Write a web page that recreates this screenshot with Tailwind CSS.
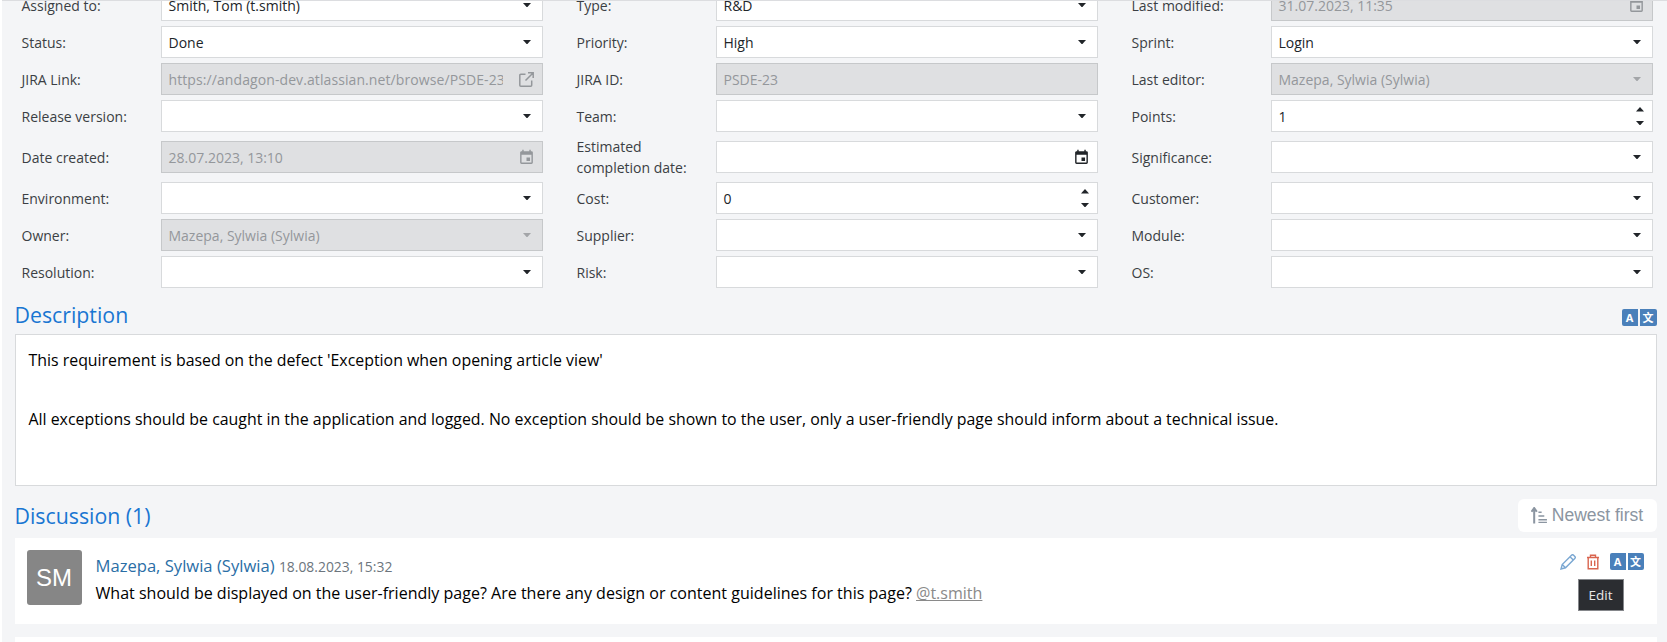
<!DOCTYPE html>
<html lang="en">
<head>
<meta charset="UTF-8" />
<title>Requirement</title>
<script src="https://cdn.jsdelivr.net/npm/@tailwindcss/browser@4"></script>
</head>
<body class="bg-white h-[642px] overflow-hidden font-['Open_Sans',sans-serif] text-[#212529]">
<div class="ml-[2px] h-[642px] overflow-hidden bg-[#f4f5f7] border-t border-[#dcdde0]">
  <div class="-mt-[12px] pl-[19.5px] pr-[14.5px] w-[1665px]">

    <form class="grid grid-cols-3 gap-x-[34px] gap-y-[5px] w-[1631px] text-[14px]">
      <div class="h-[32px] flex items-center"><label class="w-[139px] text-[#3b3f44]">Assigned to:</label><div class="flex-1 h-[32px] bg-white border border-[#d8dadc] flex items-center justify-between pl-[7px] pr-[11px]"><span>Smith, Tom (t.smith)</span><svg class="w-[8px] h-[4.5px]" viewBox="0 0 9 5"><path d="M0 0h9L4.5 5z" fill="#212529"/></svg></div></div>
      <div class="h-[32px] flex items-center"><label class="w-[139px] text-[#3b3f44]">Type:</label><div class="flex-1 h-[32px] bg-white border border-[#d8dadc] flex items-center justify-between pl-[7px] pr-[11px]"><span>R&amp;D</span><svg class="w-[8px] h-[4.5px]" viewBox="0 0 9 5"><path d="M0 0h9L4.5 5z" fill="#212529"/></svg></div></div>
      <div class="h-[32px] flex items-center"><label class="w-[139px] text-[#3b3f44]">Last modified:</label><div class="flex-1 h-[32px] bg-[#dfe0e2] border border-[#c6c8ca] flex items-center justify-between pl-[7px] pr-[7px] text-[#94979b]"><span>31.07.2023, 11:35</span><svg class="w-[17px] h-[17px]" viewBox="0 0 24 24"><path d="M19 19H5V8h14m-3-7v2H8V1H6v2H5c-1.110 0-2 .890-2 2v14a2 2 0 0 0 2 2h14a2 2 0 0 0 2-2V5a2 2 0 0 0-2-2h-1V1m-1 11h-5v5h5v-5z" fill="#94979b"/></svg></div></div>

      <div class="h-[32px] flex items-center"><label class="w-[139px] text-[#3b3f44]">Status:</label><div class="flex-1 h-[32px] bg-white border border-[#d8dadc] flex items-center justify-between pl-[7px] pr-[11px]"><span>Done</span><svg class="w-[8px] h-[4.5px]" viewBox="0 0 9 5"><path d="M0 0h9L4.5 5z" fill="#212529"/></svg></div></div>
      <div class="h-[32px] flex items-center"><label class="w-[139px] text-[#3b3f44]">Priority:</label><div class="flex-1 h-[32px] bg-white border border-[#d8dadc] flex items-center justify-between pl-[7px] pr-[11px]"><span>High</span><svg class="w-[8px] h-[4.5px]" viewBox="0 0 9 5"><path d="M0 0h9L4.5 5z" fill="#212529"/></svg></div></div>
      <div class="h-[32px] flex items-center"><label class="w-[139px] text-[#3b3f44]">Sprint:</label><div class="flex-1 h-[32px] bg-white border border-[#d8dadc] flex items-center justify-between pl-[7px] pr-[11px]"><span>Login</span><svg class="w-[8px] h-[4.5px]" viewBox="0 0 9 5"><path d="M0 0h9L4.5 5z" fill="#212529"/></svg></div></div>

      <div class="h-[32px] flex items-center"><label class="w-[139px] text-[#3b3f44]">JIRA Link:</label><div class="flex-1 h-[32px] bg-[#dfe0e2] border border-[#c6c8ca] flex items-center justify-between pl-[7px] pr-[8px] text-[#94979b]"><span class="w-[334px] overflow-hidden whitespace-nowrap tracking-[0.09px]">https://andagon-dev.atlassian.net/browse/PSDE-23</span><svg class="w-[15px] h-[15px]" viewBox="0 0 15 15"><path d="M12.700 8.500v4.700a1 1 0 0 1-1 1H1.800a1 1 0 0 1-1-1V3.300a1 1 0 0 1 1-1h4.700M9 .8h5.200V6M14 1 6.500 8.500" fill="none" stroke="#94979b" stroke-width="1.500"/></svg></div></div>
      <div class="h-[32px] flex items-center"><label class="w-[139px] text-[#3b3f44]">JIRA ID:</label><div class="flex-1 h-[32px] bg-[#dfe0e2] border border-[#c6c8ca] flex items-center pl-[7px] text-[#94979b]"><span>PSDE-23</span></div></div>
      <div class="h-[32px] flex items-center"><label class="w-[139px] text-[#3b3f44]">Last editor:</label><div class="flex-1 h-[32px] bg-[#dfe0e2] border border-[#c6c8ca] flex items-center justify-between pl-[7px] pr-[11px] text-[#94979b]"><span>Mazepa, Sylwia (Sylwia)</span><svg class="w-[8px] h-[4.5px]" viewBox="0 0 9 5"><path d="M0 0h9L4.5 5z" fill="#a3a5a8"/></svg></div></div>

      <div class="h-[32px] flex items-center"><label class="w-[139px] text-[#3b3f44]">Release version:</label><div class="flex-1 h-[32px] bg-white border border-[#d8dadc] flex items-center justify-end pr-[11px]"><svg class="w-[8px] h-[4.5px]" viewBox="0 0 9 5"><path d="M0 0h9L4.5 5z" fill="#212529"/></svg></div></div>
      <div class="h-[32px] flex items-center"><label class="w-[139px] text-[#3b3f44]">Team:</label><div class="flex-1 h-[32px] bg-white border border-[#d8dadc] flex items-center justify-end pr-[11px]"><svg class="w-[8px] h-[4.5px]" viewBox="0 0 9 5"><path d="M0 0h9L4.5 5z" fill="#212529"/></svg></div></div>
      <div class="h-[32px] flex items-center"><label class="w-[139px] text-[#3b3f44]">Points:</label><div class="flex-1 h-[32px] bg-white border border-[#d8dadc] flex items-center justify-between pl-[7px] pr-[8px]"><span>1</span><div class="flex flex-col gap-[9px]"><svg class="w-[8px] h-[4.5px]" viewBox="0 0 9 5"><path d="M0 5h9L4.500 0z" fill="#212529"/></svg><svg class="w-[8px] h-[4.5px]" viewBox="0 0 9 5"><path d="M0 0h9L4.500 5z" fill="#212529"/></svg></div></div></div>

      <div class="h-[40px] flex items-center"><label class="w-[139px] text-[#3b3f44]">Date created:</label><div class="flex-1 h-[32px] bg-[#dfe0e2] border border-[#c6c8ca] flex items-center justify-between pl-[7px] pr-[7px] text-[#94979b]"><span>28.07.2023, 13:10</span><svg class="w-[17px] h-[17px]" viewBox="0 0 24 24"><path d="M19 19H5V8h14m-3-7v2H8V1H6v2H5c-1.110 0-2 .890-2 2v14a2 2 0 0 0 2 2h14a2 2 0 0 0 2-2V5a2 2 0 0 0-2-2h-1V1m-1 11h-5v5h5v-5z" fill="#94979b"/></svg></div></div>
      <div class="h-[40px] flex items-center"><label class="w-[139px] leading-[21px] text-[#3b3f44]">Estimated<br>completion date:</label><div class="flex-1 h-[32px] bg-white border border-[#d8dadc] flex items-center justify-end pr-[7px]"><svg class="w-[17px] h-[17px]" viewBox="0 0 24 24"><path d="M19 19H5V8h14m-3-7v2H8V1H6v2H5c-1.110 0-2 .890-2 2v14a2 2 0 0 0 2 2h14a2 2 0 0 0 2-2V5a2 2 0 0 0-2-2h-1V1m-1 11h-5v5h5v-5z" fill="#212529"/></svg></div></div>
      <div class="h-[40px] flex items-center"><label class="w-[139px] text-[#3b3f44]">Significance:</label><div class="flex-1 h-[32px] bg-white border border-[#d8dadc] flex items-center justify-end pr-[11px]"><svg class="w-[8px] h-[4.5px]" viewBox="0 0 9 5"><path d="M0 0h9L4.5 5z" fill="#212529"/></svg></div></div>

      <div class="h-[32px] flex items-center"><label class="w-[139px] text-[#3b3f44]">Environment:</label><div class="flex-1 h-[32px] bg-white border border-[#d8dadc] flex items-center justify-end pr-[11px]"><svg class="w-[8px] h-[4.5px]" viewBox="0 0 9 5"><path d="M0 0h9L4.5 5z" fill="#212529"/></svg></div></div>
      <div class="h-[32px] flex items-center"><label class="w-[139px] text-[#3b3f44]">Cost:</label><div class="flex-1 h-[32px] bg-white border border-[#d8dadc] flex items-center justify-between pl-[7px] pr-[8px]"><span>0</span><div class="flex flex-col gap-[9px]"><svg class="w-[8px] h-[4.5px]" viewBox="0 0 9 5"><path d="M0 5h9L4.500 0z" fill="#212529"/></svg><svg class="w-[8px] h-[4.5px]" viewBox="0 0 9 5"><path d="M0 0h9L4.500 5z" fill="#212529"/></svg></div></div></div>
      <div class="h-[32px] flex items-center"><label class="w-[139px] text-[#3b3f44]">Customer:</label><div class="flex-1 h-[32px] bg-white border border-[#d8dadc] flex items-center justify-end pr-[11px]"><svg class="w-[8px] h-[4.5px]" viewBox="0 0 9 5"><path d="M0 0h9L4.5 5z" fill="#212529"/></svg></div></div>

      <div class="h-[32px] flex items-center"><label class="w-[139px] text-[#3b3f44]">Owner:</label><div class="flex-1 h-[32px] bg-[#dfe0e2] border border-[#c6c8ca] flex items-center justify-between pl-[7px] pr-[11px] text-[#94979b]"><span>Mazepa, Sylwia (Sylwia)</span><svg class="w-[8px] h-[4.5px]" viewBox="0 0 9 5"><path d="M0 0h9L4.5 5z" fill="#a3a5a8"/></svg></div></div>
      <div class="h-[32px] flex items-center"><label class="w-[139px] text-[#3b3f44]">Supplier:</label><div class="flex-1 h-[32px] bg-white border border-[#d8dadc] flex items-center justify-end pr-[11px]"><svg class="w-[8px] h-[4.5px]" viewBox="0 0 9 5"><path d="M0 0h9L4.5 5z" fill="#212529"/></svg></div></div>
      <div class="h-[32px] flex items-center"><label class="w-[139px] text-[#3b3f44]">Module:</label><div class="flex-1 h-[32px] bg-white border border-[#d8dadc] flex items-center justify-end pr-[11px]"><svg class="w-[8px] h-[4.5px]" viewBox="0 0 9 5"><path d="M0 0h9L4.5 5z" fill="#212529"/></svg></div></div>

      <div class="h-[32px] flex items-center"><label class="w-[139px] text-[#3b3f44]">Resolution:</label><div class="flex-1 h-[32px] bg-white border border-[#d8dadc] flex items-center justify-end pr-[11px]"><svg class="w-[8px] h-[4.5px]" viewBox="0 0 9 5"><path d="M0 0h9L4.5 5z" fill="#212529"/></svg></div></div>
      <div class="h-[32px] flex items-center"><label class="w-[139px] text-[#3b3f44]">Risk:</label><div class="flex-1 h-[32px] bg-white border border-[#d8dadc] flex items-center justify-end pr-[11px]"><svg class="w-[8px] h-[4.5px]" viewBox="0 0 9 5"><path d="M0 0h9L4.5 5z" fill="#212529"/></svg></div></div>
      <div class="h-[32px] flex items-center"><label class="w-[139px] text-[#3b3f44]">OS:</label><div class="flex-1 h-[32px] bg-white border border-[#d8dadc] flex items-center justify-end pr-[11px]"><svg class="w-[8px] h-[4.5px]" viewBox="0 0 9 5"><path d="M0 0h9L4.5 5z" fill="#212529"/></svg></div></div>
    </form>

    <!-- description -->
    <div class="-ml-[7px] w-[1642px]">
      <div class="h-[46px] flex items-end justify-between pb-[4px]">
        <h2 class="text-[21.300px] leading-[30px] text-[#1976d2]">Description</h2>
        <div class="flex gap-[2px] mb-[4px] text-white text-[11px] font-bold leading-[17px] text-center">
          <span class="w-[16px] h-[17px] bg-[#4a80ba] rounded-l-[2px]">A</span>
          <span class="w-[17px] h-[17px] bg-[#4a80ba] rounded-r-[2px] font-['Noto_Sans_CJK_SC',sans-serif]">文</span>
        </div>
      </div>
      <div class="h-[152px] bg-white border border-[#d8dadc] px-[13px] pt-[11px] text-[15.900px] leading-[29px] text-black">
        <p>This requirement is based on the defect 'Exception when opening article view'</p>
        <p class="mt-[30px]">All exceptions should be caught in the application and logged. No exception should be shown to the user, only a user-friendly page should inform about a technical issue.</p>
      </div>

      <!-- discussion -->
      <div class="mt-[13px] h-[39px] flex items-start justify-between">
        <h2 class="text-[21.300px] leading-[34px] text-[#1976d2]">Discussion (1)</h2>
        <button class="w-[139px] h-[33px] bg-white rounded-[6px] flex items-center justify-center gap-[4px] text-[17.500px] text-[#8b95a1] font-['Liberation_Sans',sans-serif]">
          <svg class="w-[17px] h-[17px]" viewBox="0 0 16 16"><path d="M3 15.500V2M.5 4.500 3 1l2.500 3.500" fill="none" stroke="#8b95a1" stroke-width="1.900"/><path d="M7 5h3M7 8.500h5.500M7 12h8M7 14.500h8" stroke="#8b95a1" stroke-width="1.300"/></svg>
          <span>Newest first</span>
        </button>
      </div>

      <div class="relative h-[86px] bg-white flex items-start pl-[12px] pt-[12px]">
        <div class="w-[55px] h-[55px] rounded-[3px] bg-[#868686] text-white text-[24px] font-['Liberation_Sans',sans-serif] flex items-center justify-center">SM</div>
        <div class="ml-[14px] flex-1">
          <div class="leading-[24px] mt-[4px] text-[#2a6ea6] text-[16.600px]">Mazepa, Sylwia (Sylwia) <span class="text-[13.900px] text-[#6c757d]">18.08.2023, 15:32</span></div>
          <p class="mt-[2px] text-[16.050px] leading-[24px] text-black">What should be displayed on the user-friendly page? Are there any design or content guidelines for this page? <a class="text-[#8a8a8a] underline">@t.smith</a></p>
        </div>
        <div class="absolute right-[13px] top-[15px] flex items-center">
          <svg class="w-[16px] h-[16px] mr-[10px]" viewBox="0 0 16 16"><path d="M1 15l1.200-4.500L11.500 1.200a1.500 1.500 0 0 1 2.100 0l1.200 1.200a1.500 1.500 0 0 1 0 2.100L5.500 13.800zM2.200 10.500l3.300 3.300M10 2.700l3.300 3.300" fill="none" stroke="#7aa7d2" stroke-width="1.400"/></svg>
          <svg class="w-[14px] h-[16px] mr-[10px]" viewBox="0 0 14 16"><path d="M1 3.500h12M4.500 3.500V1.300h5v2.200M2.200 3.500v11.200h9.600V3.500M5.300 6.500v5.500M8.700 6.500v5.500" fill="none" stroke="#d9654f" stroke-width="1.400"/></svg>
          <div class="flex gap-[2px] text-white text-[11px] font-bold leading-[17px] text-center">
            <span class="w-[16px] h-[17px] bg-[#4a80ba] rounded-l-[2px]">A</span>
            <span class="w-[16px] h-[17px] bg-[#4a80ba] rounded-r-[2px] font-['Noto_Sans_CJK_SC',sans-serif]">文</span>
          </div>
        </div>
        <div class="absolute left-[1563px] top-[41px] w-[46px] h-[32px] bg-[#2b2d31] border border-[#85878b] text-[#e8e8e8] text-[13.500px] flex items-center justify-center">Edit</div>
      </div>

      <div class="mt-[13px] h-[20px] bg-white"></div>
    </div>
  </div>
</div>
</body>
</html>
